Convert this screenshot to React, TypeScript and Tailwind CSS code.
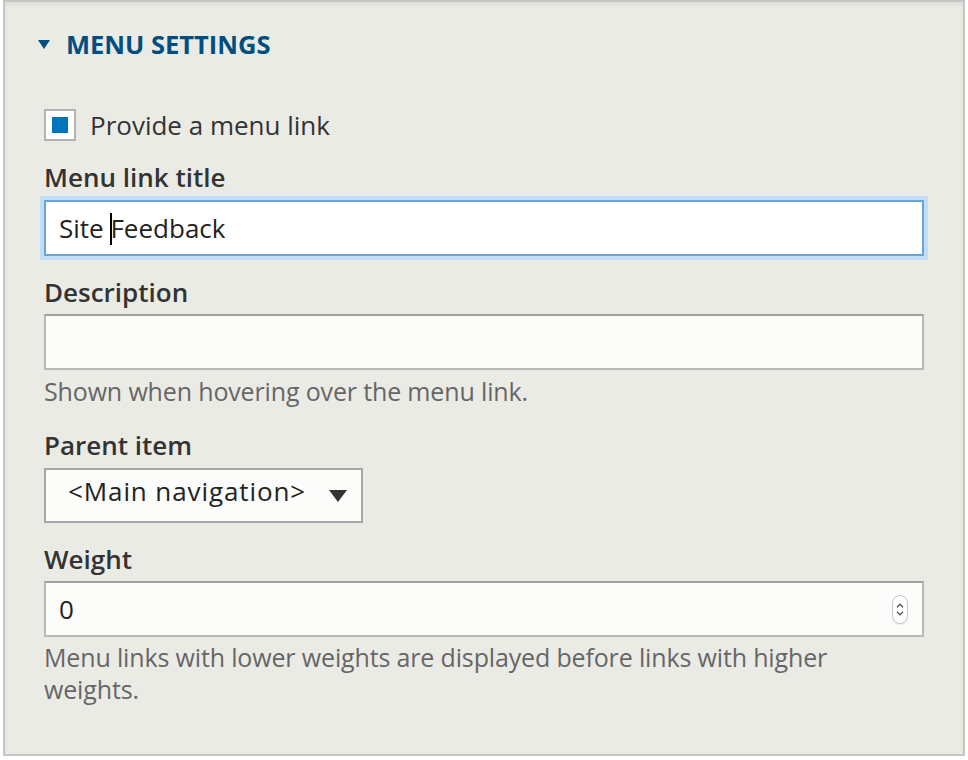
import React from 'react';

const font = { fontFamily: '"Open Sans", "Liberation Sans", sans-serif' };

function Label({ children, className = '' }: { children: React.ReactNode; className?: string }) {
  return <div className={`h-[36px] text-[26px] leading-[36px] font-semibold text-[#333] ${className}`}>{children}</div>;
}

function Help({ children, className = '' }: { children: React.ReactNode; className?: string }) {
  return <div className={`text-[25px] leading-[32px] tracking-[-0.15px] text-[#666] ${className}`}>{children}</div>;
}

function Spinner() {
  return (
    <div className="flex h-[29px] w-[16px] flex-col items-center justify-center gap-[3px] rounded-full border border-[#c8c8c8] bg-white shadow-[0_1px_1px_rgba(0,0,0,0.08)]">
      <svg width="8" height="5" viewBox="0 0 8 5" fill="none">
        <path d="M1 4.2L4 1.2L7 4.2" stroke="#555" strokeWidth="1.3" />
      </svg>
      <svg width="8" height="5" viewBox="0 0 8 5" fill="none">
        <path d="M1 0.8L4 3.8L7 0.8" stroke="#555" strokeWidth="1.3" />
      </svg>
    </div>
  );
}

export default function App() {
  return (
    <div className="h-[760px] w-[968px] overflow-hidden bg-white" style={font}>
      <div className="ml-[3px] h-[756px] w-[962px] border-2 border-[#c5c5c1] bg-[#ebebe6] shadow-[inset_0_3px_4px_rgba(0,0,0,0.06)]">
        {/* summary */}
        <div className="mt-[24px] flex h-[36px] items-center pl-[33px]">
          <svg width="12" height="9" viewBox="0 0 12 9" className="mr-[16px]">
            <polygon points="0,0 12,0 6,9" fill="#004f80" />
          </svg>
          <span className="text-[25.5px] leading-[36px] font-bold uppercase text-[#004f80]">Menu settings</span>
        </div>

        <div className="px-[39px]">
          {/* checkbox */}
          <div className="mt-[45px] flex h-[36px] items-center">
            <div className="flex h-[32px] w-[32px] items-center justify-center border-2 border-[#b3b3b3] bg-white">
              <div className="h-[16px] w-[16px] bg-[#0074bd]" />
            </div>
            <span className="ml-[14px] text-[26px] leading-[36px] text-[#333]">Provide a menu link</span>
          </div>

          {/* menu link title */}
          <Label className="mt-[16px]">Menu link title</Label>
          <div className="mt-[5px] h-[56px] border-2 border-[#6ca5d6] bg-white pl-[13px] pt-[8px] text-[26px] leading-[36px] text-[#222] shadow-[0_0_0_4px_#c1ddf8]">
            Site <span className="-mr-[2px] inline-block h-[32px] w-[2px] bg-black align-[-7px]" />
            Feedback
          </div>

          {/* description */}
          <Label className="mt-[18px]">Description</Label>
          <div className="mt-[4px] h-[56px] border-2 border-[#b8b8b8] border-t-[#a0a0a0] bg-[#fcfcfa]" />
          <Help className="mt-[5px]">Shown when hovering over the menu link.</Help>

          {/* parent item */}
          <Label className="mt-[20px]">Parent item</Label>
          <div className="mt-[5px] flex h-[55px] w-[319px] items-start border-2 border-[#a6a6a6] bg-[#fcfcfa] pl-[22px] pt-[3px]">
            <span className="text-[26px] leading-[36px] tracking-[0.9px] text-[#222]">&lt;Main navigation&gt;</span>
            <svg width="18" height="12" viewBox="0 0 18 12" className="ml-[23px] mt-[17px]">
              <polygon points="0,0 18,0 9,12" fill="#333" />
            </svg>
          </div>

          {/* weight */}
          <Label className="mt-[18px]">Weight</Label>
          <div className="mt-[4px] flex h-[56px] items-center justify-between border-2 border-[#b8b8b8] border-t-[#a0a0a0] bg-[#fcfcfa] pl-[13px] pr-[14px]">
            <span className="text-[26px] leading-[36px] text-[#222]">0</span>
            <Spinner />
          </div>
          <Help className="mt-[4px]">Menu links with lower weights are displayed before links with higher weights.</Help>
        </div>
      </div>
    </div>
  );
}
